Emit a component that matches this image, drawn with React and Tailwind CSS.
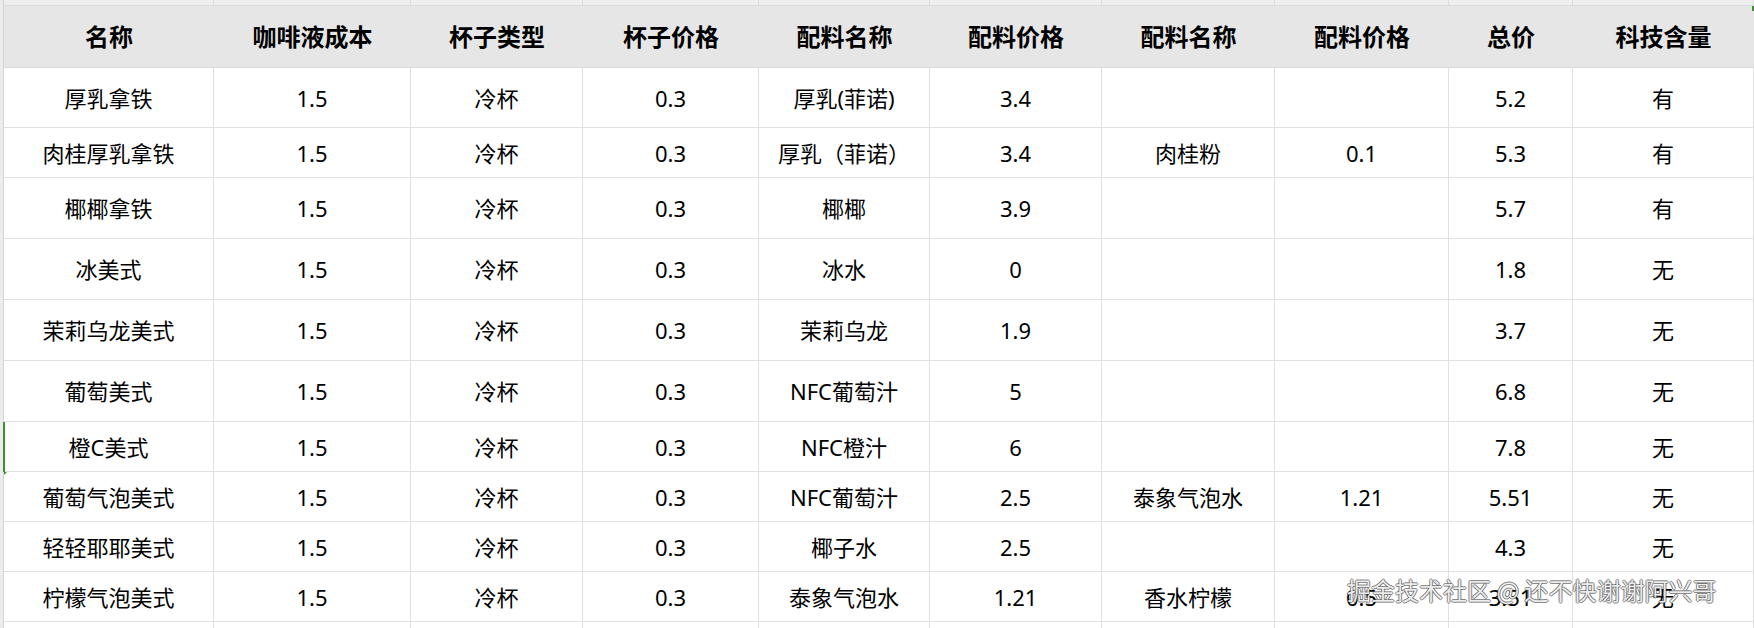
import React from 'react';

const columns = ['名称', '咖啡液成本', '杯子类型', '杯子价格', '配料名称', '配料价格', '配料名称', '配料价格', '总价', '科技含量'];

const rows = [
  { h: 'h-[60px]', cells: ['厚乳拿铁', '1.5', '冷杯', '0.3', '厚乳(菲诺)', '3.4', '', '', '5.2', '有'] },
  { h: 'h-[50px]', cells: ['肉桂厚乳拿铁', '1.5', '冷杯', '0.3', '厚乳（菲诺）', '3.4', '肉桂粉', '0.1', '5.3', '有'] },
  { h: 'h-[61px]', cells: ['椰椰拿铁', '1.5', '冷杯', '0.3', '椰椰', '3.9', '', '', '5.7', '有'] },
  { h: 'h-[61px]', cells: ['冰美式', '1.5', '冷杯', '0.3', '冰水', '0', '', '', '1.8', '无'] },
  { h: 'h-[61px]', cells: ['茉莉乌龙美式', '1.5', '冷杯', '0.3', '茉莉乌龙', '1.9', '', '', '3.7', '无'] },
  { h: 'h-[61px]', cells: ['葡萄美式', '1.5', '冷杯', '0.3', 'NFC葡萄汁', '5', '', '', '6.8', '无'] },
  { h: 'h-[50px]', cells: ['橙C美式', '1.5', '冷杯', '0.3', 'NFC橙汁', '6', '', '', '7.8', '无'], selected: true },
  { h: 'h-[50px]', cells: ['葡萄气泡美式', '1.5', '冷杯', '0.3', 'NFC葡萄汁', '2.5', '泰象气泡水', '1.21', '5.51', '无'] },
  { h: 'h-[50px]', cells: ['轻轻耶耶美式', '1.5', '冷杯', '0.3', '椰子水', '2.5', '', '', '4.3', '无'] },
  { h: 'h-[50px]', cells: ['柠檬气泡美式', '1.5', '冷杯', '0.3', '泰象气泡水', '1.21', '香水柠檬', '0.5', '3.51', '无'] },
  { h: 'h-[50px]', cells: ['', '', '', '', '', '', '', '', '', ''] },
];

const gridCols = 'grid grid-cols-[4px_210px_197px_172px_176px_171px_172px_173px_174px_124px_181px]';

const App = () => {
  return (
    <div className="relative w-[1754px] h-[628px] overflow-hidden bg-white text-black font-['Noto_Sans','Noto_Sans_CJK_SC',sans-serif]">
      {/* strip of the sheet above the header */}
      <div className={`${gridCols} h-[6px]`}>
        <div className="bg-[#ececec] border-r border-[#d6d6d6]" />
        {columns.map((_, i) => (
          <div key={i} className="bg-[#efefef] border-r border-b border-[#dcdcdc]" />
        ))}
      </div>

      {/* header */}
      <div className={`${gridCols} h-[62px]`}>
        <div className="bg-[#ececec] border-r border-[#d6d6d6]" />
        {columns.map((c, i) => (
          <div
            key={i}
            className="flex items-center justify-center bg-[#e6e6e6] border-b border-[#dadada] text-[24px] font-bold"
          >
            {c}
          </div>
        ))}
      </div>

      {rows.map((row, r) => (
        <div key={r} className={`${gridCols} ${row.h}`}>
          <div className="relative bg-[#ececec] border-r border-[#d6d6d6]">
            {row.selected && (
              <>
                <div className="absolute right-[-2px] top-0 bottom-0 w-[2px] bg-[#3f8f2f]" />
                <div className="absolute right-[-4px] bottom-[-4px] w-0 h-0 border-t-[4px] border-t-[#3f8f2f] border-r-[4px] border-r-transparent" />
              </>
            )}
          </div>
          {row.cells.map((c, i) => (
            <div
              key={i}
              className="flex items-center justify-center border-r border-b border-[#e1e1e1] text-[22px] leading-none"
            >
              {c}
            </div>
          ))}
        </div>
      ))}

      <div className="absolute right-0 top-[6px] w-[2px] h-[5px] bg-[#3f8f2f]" />

      {/* watermark */}
      <div className="absolute left-[1347px] top-[578px] text-[24px] leading-none whitespace-nowrap text-white/90 font-['Noto_Sans_CJK_SC',sans-serif] [text-shadow:1px_0_0_rgba(60,60,60,0.6),-1px_0_0_rgba(60,60,60,0.6),0_1px_0_rgba(60,60,60,0.6),0_-1px_0_rgba(60,60,60,0.6)]">
        掘金技术社区 @ 还不快谢谢阿兴哥
      </div>
    </div>
  );
};

export default App;
